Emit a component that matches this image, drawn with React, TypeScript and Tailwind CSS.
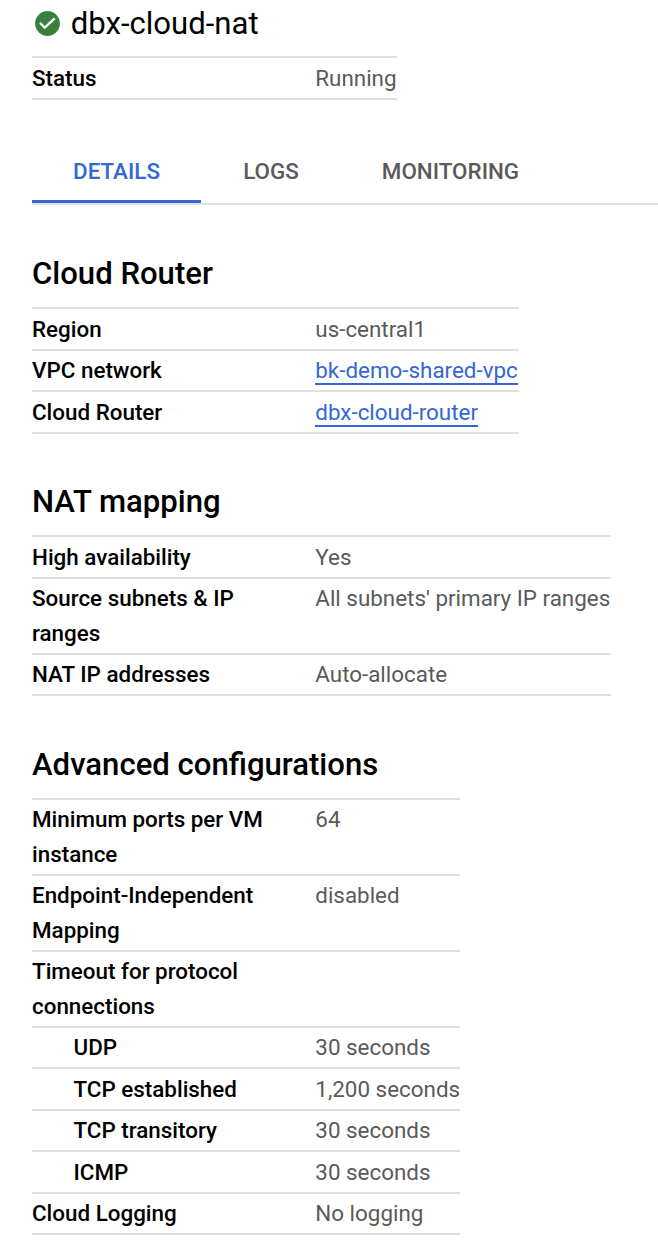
import React from "react";

type Row = { label: string; value?: string; link?: boolean; indent?: boolean };

const router: Row[] = [
  { label: "Region", value: "us-central1" },
  { label: "VPC network", value: "bk-demo-shared-vpc", link: true },
  { label: "Cloud Router", value: "dbx-cloud-router", link: true },
];
const mapping: Row[] = [
  { label: "High availability", value: "Yes" },
  { label: "Source subnets & IP ranges", value: "All subnets' primary IP ranges" },
  { label: "NAT IP addresses", value: "Auto-allocate" },
];
const advanced: Row[] = [
  { label: "Minimum ports per VM instance", value: "64" },
  { label: "Endpoint-Independent Mapping", value: "disabled" },
  { label: "Timeout for protocol connections" },
  { label: "UDP", value: "30 seconds", indent: true },
  { label: "TCP established", value: "1,200 seconds", indent: true },
  { label: "TCP transitory", value: "30 seconds", indent: true },
  { label: "ICMP", value: "30 seconds", indent: true },
  { label: "Cloud Logging", value: "No logging" },
];

function Table({ rows, width }: { rows: Row[]; width: string }) {
  return (
    <dl className={`border-t-2 border-[#e0e0e0] ${width}`}>
      {rows.map((r) => (
        <div key={r.label} className="flex border-b-2 border-[#e0e0e0] pt-[2.5px] pb-[2.5px] text-[22.4px] leading-[34.5px]">
          <dt className={`w-[283.3px] shrink-0 font-medium text-black ${r.indent ? "pl-[41.5px]" : "pr-[40px]"}`}>
            {r.label}
          </dt>
          <dd className="whitespace-nowrap text-[#5a5a5a]">
            {r.link ? (
              <a className="block h-[32px] border-b-2 border-[#3367d6] text-[#3367d6]">{r.value}</a>
            ) : (
              r.value
            )}
          </dd>
        </div>
      ))}
    </dl>
  );
}

function Section({ title, rows, width }: { title: string; rows: Row[]; width: string }) {
  return (
    <section className="pt-[47.5px]">
      <h2 className="h-[54px] text-[31.1px] font-medium leading-[42px]">{title}</h2>
      <Table rows={rows} width={width} />
    </section>
  );
}

export default function App() {
  return (
    <main className="h-[1246px] overflow-hidden bg-white pl-8 font-['Roboto',sans-serif] text-black">
      <header className="flex h-14 items-start gap-[10.7px] pl-[3px]">
        <svg viewBox="0 0 25 25" className="mt-[11px] size-[25px]">
          <circle cx="12.5" cy="12.5" r="12.4" fill="#3a803d" />
          <path d="m5 11.9 4.8 4.8 9.8-9.4" fill="none" stroke="white" strokeWidth="2.3" />
        </svg>
        <h1 className="text-[31.1px] leading-[48px]">dbx-cloud-nat</h1>
      </header>
      <Table rows={[{ label: "Status", value: "Running" }]} width="w-[365px]" />
      <nav className="mt-[40.5px] mb-[0.5px] flex h-[65px] border-b-2 border-[#e0e0e0] text-[22.4px] font-medium leading-[62px] text-[#5a5a5a]">
        <a className="h-[63px] w-[169px] border-b-[3px] border-[#3367d6] text-center text-[#3367d6]">DETAILS</a>
        <a className="w-[140px] text-center">LOGS</a>
        <a className="w-[219px] text-center">MONITORING</a>
      </nav>
      <Section title="Cloud Router" rows={router} width="w-[487px]" />
      <Section title="NAT mapping" rows={mapping} width="w-[579px]" />
      <Section title="Advanced configurations" rows={advanced} width="w-[428.4px]" />
    </main>
  );
}
